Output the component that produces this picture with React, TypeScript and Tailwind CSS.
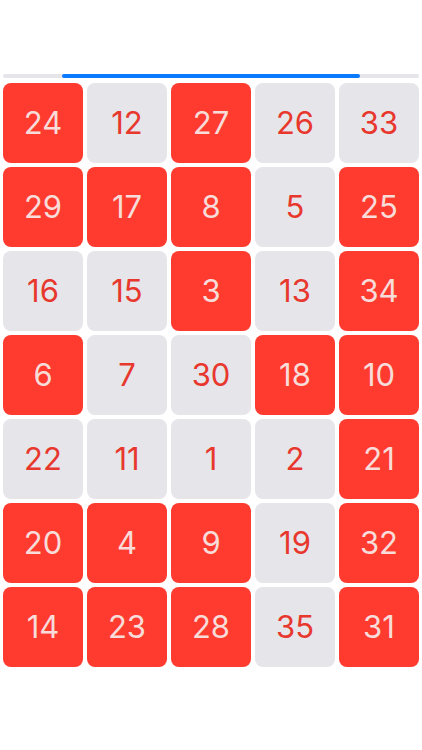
const CELLS: [number, boolean][][] = [
  [[24, true], [12, false], [27, true], [26, false], [33, false]],
  [[29, true], [17, true], [8, true], [5, false], [25, true]],
  [[16, false], [15, false], [3, true], [13, false], [34, true]],
  [[6, true], [7, false], [30, false], [18, true], [10, true]],
  [[22, false], [11, false], [1, false], [2, false], [21, true]],
  [[20, true], [4, true], [9, true], [19, false], [32, true]],
  [[14, true], [23, true], [28, true], [35, false], [31, true]],
];

export default function App() {
  return (
    <div
      className="h-[750px] w-[422px] bg-white px-[3px] pt-[74px]"
      style={{ fontFamily: "Inter, 'Liberation Sans', sans-serif" }}
    >
      {/* progress */}
      <div className="h-[4px] w-[416px] rounded-full bg-[#e5e5ea]">
        <div className="ml-[59px] h-[4px] w-[298px] rounded-full bg-[#0a7aff]" />
      </div>

      <div className="mt-[5px] grid grid-cols-5 gap-[4px]">
        {CELLS.flat().map(([n, on]) => (
          <div
            key={n}
            className={`flex h-[80px] items-center justify-center rounded-[8px] text-[31px] font-normal ${
              on ? "bg-[#ff3b30] text-[#f7dcd9]" : "bg-[#e5e5ea] text-[#e8382e]"
            }`}
          >
            {n}
          </div>
        ))}
      </div>
    </div>
  );
}
